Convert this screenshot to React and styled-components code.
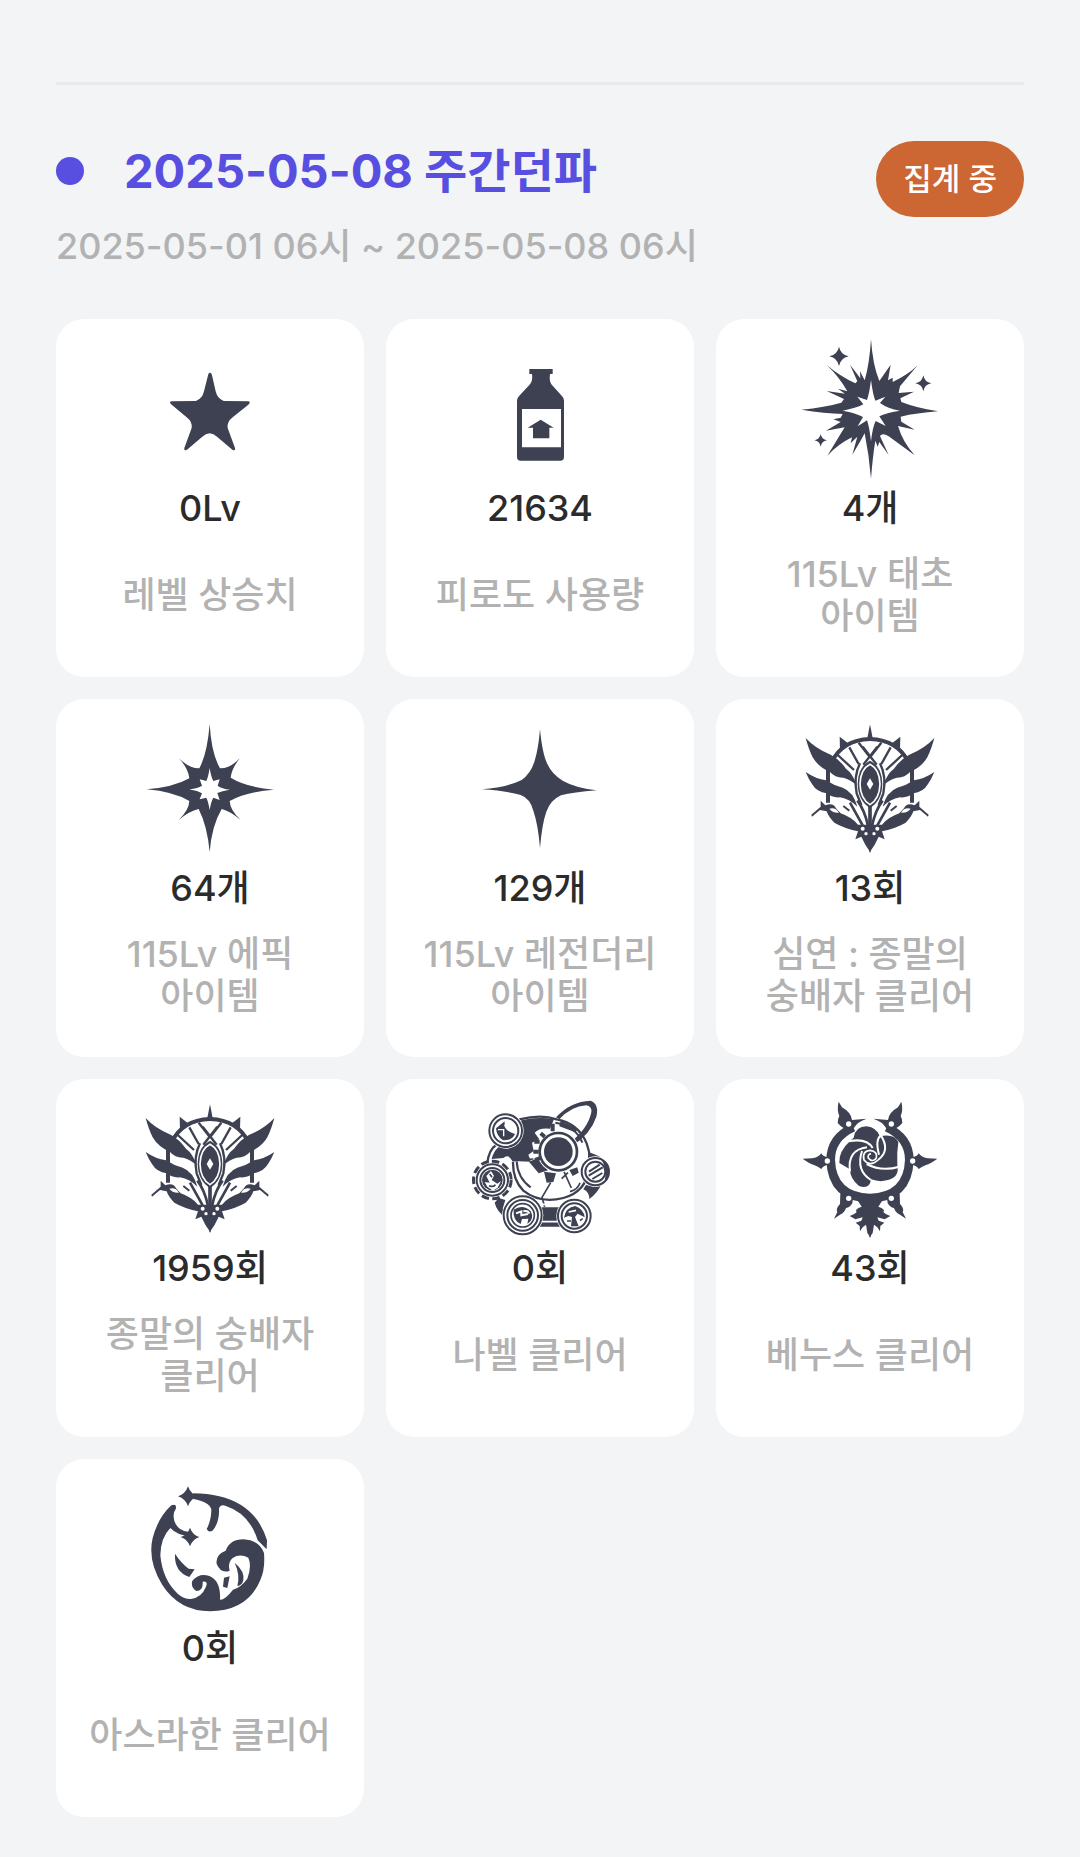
import React from 'react';
import styled, { createGlobalStyle } from 'styled-components';

const GlobalStyle = createGlobalStyle`
    * {
        box-sizing: border-box;
    }

    body {
        margin: 0;
        background: #f2f4f6;
        font-family: Inter, "Noto Sans CJK KR", sans-serif;
        word-break: keep-all;
    }
`
const Page = styled.main`
    padding: 82px 56px 40px;
`
const Section = styled.section`
    border-top: 3px solid #e8eaec;
    padding-top: 56px;
`
const Header = styled.header`
    display: flex;
    justify-content: space-between;
    align-items: flex-start;
    margin-bottom: 51px;
`
const TitleRow = styled.div`
    display: flex;
    align-items: center;
    gap: 40px;
    margin-bottom: 23px;
`
const Dot = styled.span`
    width: 28px;
    height: 28px;
    border-radius: 50%;
    background: #584ee0;
`
const Title = styled.h2`
    margin: 0;
    font-weight: 700;
    font-size: 47px;
    line-height: 60px;
    color: #584ee0;
`
const Period = styled.p`
    margin: 0;
    font-weight: 500;
    font-size: 36px;
    line-height: 44px;
    color: #b2b2b2;
`
const Badge = styled.span`
    flex-shrink: 0;
    padding: 0 27px;
    border-radius: 38px;
    background: #cc6633;
    color: #ffffff;
    font-weight: 500;
    font-size: 31px;
    line-height: 76px;
`
const Grid = styled.ul`
    display: grid;
    grid-template-columns: repeat(3, 1fr);
    gap: 22px;
    margin: 0;
    padding: 0;
    list-style: none;
`
const Card = styled.li`
    display: flex;
    flex-direction: column;
    align-items: center;
    padding: 19px 20px 40px;
    border-radius: 28px;
    background: #ffffff;
    text-align: center;
`
const Icon = styled.svg`
    width: 144px;
    height: 144px;
    fill: #3d4152;
    color: #3d4152;
`
const Value = styled.strong`
    font-weight: 500;
    font-size: 36px;
    line-height: 52px;
    color: #2b2b2b;
`
const Label = styled.span`
    display: flex;
    align-items: center;
    min-height: 84px;
    margin-top: 19px;
    font-weight: 500;
    font-size: 36px;
    line-height: 42px;
    color: #b2b2b2;
`

const line = { fill: 'none', stroke: 'currentColor' };
const white = { fill: '#ffffff' };
const whiteLine = { fill: 'none', stroke: '#ffffff' };

function Sparkle({ x, y, r, core = 7 }) {
    const k = r / core;
    return (
        <path d={`M${x} ${y - r}Q${x + k} ${y - k} ${x + r} ${y}Q${x + k} ${y + k} ${x} ${y + r}Q${x - k} ${y + k} ${x - r} ${y}Q${x - k} ${y - k} ${x} ${y - r}Z`} />
    )
}

const Star = () => (
    <path d="M240 128Q245 128 247 140L257 184Q262 206 281 213L355 214Q364 216 355 224L308 262Q290 276 293 294L315 354Q317 364 307 359L262 321Q239 299 216 321L171 359Q161 364 163 354L185 294Q188 276 170 262L125 224Q114 216 125 214L198 213Q217 206 222 184L233 140Q235 128 240 128Z" />
)

const Bottle = () => (
    <>
        <path d="M208 117H278V132H270Q267 152 274 163L305 197Q312 203 312 212V380Q312 392 301 392H182Q171 392 171 380V212Q171 203 178 197L210 163Q219 152 216 132H208Z" />
        <path d="M186 237H303V352H186Z" {...white} />
        <path d="M242 269L281 293H268V325H219V293H203Z" />
    </>
)

const Burst = () => (
    <>
        <path d="M243 28Q248 105 268 153L302 104L294 151L308 143V156Q355 134 383 106L330 169L326 189L372 185L331 205L334 216Q380 234 444 244Q380 249 332 260L334 275L374 299L324 288Q338 336 374 376Q333 346 296 319Q277 307 270 318L296 375L268 336L263 350L256 332Q248 380 243 446Q238 380 224 310L213 330L187 374L202 320L182 340L186 322Q145 342 112 377L164 292L108 302L152 276L130 268L152 263L158 252Q105 250 34 239Q105 232 154 218L162 207L110 183L165 191L144 176L172 184Q146 138 110 105Q152 140 196 160L202 154L180 104L211 145L210 124L224 151Q238 105 243 28Z" />
        <path d="M243 150Q249 196 256 212L286 200L270 219Q293 236 330 242Q293 247 268 259L287 288L257 273Q248 290 243 334Q238 290 231 271L203 289L219 261Q198 249 158 242Q198 235 220 223L202 200L231 210Q238 190 243 150Z" {...white} />
        <Sparkle x={147} y={79} r={29} core={6} />
        <Sparkle x={400} y={160} r={24} />
        <Sparkle x={92} y={331} r={19} />
    </>
)

const EpicStar = () => (
    <>
        <path d="M239 42Q244 130 270 175Q300 176 330 144Q305 175 302 203Q350 232 432 239Q350 245 299 273Q300 300 332 330Q300 303 275 297Q245 348 239 426Q232 348 206 297Q178 303 146 330Q177 300 178 273Q130 245 50 238Q130 232 178 205Q175 175 146 144Q178 176 208 175Q232 130 239 42Z" />
        <path d="M239 174Q243 200 250 213L269 208L263 227Q275 236 300 239Q275 243 262 249L269 270L250 263Q243 275 239 300Q235 275 229 263L209 268L216 250Q204 243 178 238Q204 235 216 227L209 208L229 213Q235 200 239 174Z" {...white} />
    </>
)

const LegendStar = () => (
    <path d="M240 58Q247 132 262 162Q277 194 308 212Q345 233 410 241Q340 247 303 256Q272 270 259 305Q246 342 240 414Q234 342 220 302Q210 265 182 255Q140 243 66 238Q140 232 185 210Q213 190 224 152Q235 118 240 58Z" />
)

const CultistHalf = () => (
    <>
        <path d="M47 84Q76 116 122 134Q148 148 168 176Q188 190 202 228Q182 208 160 203Q136 204 120 186Q84 170 68 142Q56 118 47 84Z" />
        <path d="M47 186Q78 207 108 211Q130 226 158 233Q190 245 202 290Q180 268 150 262Q126 264 110 250Q80 246 66 222Q56 208 47 186Z" />
        <path d="M92 272L106 286Q130 277 138 295L152 310Q186 322 204 344H242V428Q224 404 214 380L196 388L204 364Q160 354 133 338Q115 320 110 304L90 300L66 320L64 314L92 290Z" />
        <path d="M149 80L174 100L150 120Z" />
        <path d="M114 180V278M124 158Q156 90 240 87" {...line} strokeWidth="12" />
        <path d="M140 132L192 180M178 112L206 162" {...line} strokeWidth="7" />
        <path d="M206 98L240 142M220 164L262 110" {...line} strokeWidth="7" />
        <path d="M210 160Q190 200 200 250L214 285" {...line} strokeWidth="7" />
        <path d="M202 272Q224 300 234 348M180 278L218 346" {...line} strokeWidth="8" />
        <path d="M160 288L178 302" {...line} strokeWidth="6" />
        <path d="M118 296Q137 291 147 308Q128 310 118 296Z" {...white} />
        <circle cx="218" cy="356" r="6" {...white} />
        <circle cx="228" cy="371" r="5" {...white} />
    </>
)

const Cultist = () => (
    <>
        <CultistHalf />
        <g transform="translate(480 0) scale(-1 1)"><CultistHalf /></g>
        <path d="M240 43L248 84H232Z" />
        <path d="M240 285V352" {...line} strokeWidth="11" />
        <path d="M240 152Q276 170 277 222Q276 272 240 294Q204 272 203 222Q204 170 240 152Z" />
        <path d="M240 163Q269 178 270 222Q269 266 240 284Q211 266 210 222Q211 178 240 163Z" {...whiteLine} strokeWidth="5" />
        <path d="M240 205L250 222L240 239L230 222Z" {...white} />
    </>
)

function Medal({ x, y, r, children }) {
    return (
        <g transform={`translate(${x} ${y})`}>
            <circle r={r + 3} {...white} />
            <circle r={r - 2} {...line} strokeWidth="6" />
            <circle r={r - 13} {...line} strokeWidth="6" />
            {children}
        </g>
    )
}

const Nabel = () => (
    <>
        <path d="M184 91Q235 78 282 88L270 116Q238 112 224 128L238 148L216 158L221 183L205 194L213 215L157 213Q145 190 130 204L95 207Q106 163 151 156Q184 130 184 91Z" />
        <path d="M82 220Q86 180 108 165M178 88Q245 72 290 88Q355 100 380 160Q395 200 386 238Q378 305 310 324Q240 342 190 302Q158 270 159 215" {...line} strokeWidth="7" />
        <path d="M170 214Q173 264 212 292M286 98Q348 108 367 158" {...line} strokeWidth="6" />
        <path d="M302 92L354 116L346 127L298 109Z" />
        <path d="M386 186L416 198L436 212L440 240L380 232Z" />
        <path d="M288 82Q332 34 392 32Q418 42 409 80Q392 132 336 168L330 158Q384 116 394 67Q396 49 379 46Q333 49 298 88Z" />
        <path d="M207 215L234 204L264 241L236 250Z" />
        <path d="M252 245L288 250L280 276L260 278ZM328 240L352 232L356 248L338 258Z" />
        <path d="M272 278L246 322L254 350M312 245L334 294M158 212L220 207M305 266L324 248M330 305Q354 298 360 278" {...line} strokeWidth="5" />
        <circle cx="295" cy="185" r="63" {...white} />
        <circle cx="295" cy="185" r="56" {...line} strokeWidth="8" />
        <circle cx="295" cy="185" r="43" />
        <path d="M223 155H239M220 185H236M225 210L240 204M242 130L254 140M278 101V124" {...line} strokeWidth="12" />
        <path d="M242 352H300V410H238Z" />
        <path d="M235 340Q270 350 307 336M238 395H305" {...whiteLine} strokeWidth="5" />
        <path d="M378 285Q400 292 426 278Q414 308 388 327Q388 306 370 298Z" />
        <path d="M104 338Q110 365 139 384L128 356L136 330L116 324Z" />
        <circle cx="97" cy="270" r="55" {...line} strokeWidth="12" strokeDasharray="22 10" />
        <Medal x={137} y={122} r={51}>
            <path d="M-29 -7L-3 -28Q-6 1 28 10Q20 30 -8 29Q-27 18 -29 -7Z" />
            <path d="M-23 -3H-6V17M-3 -18Q2 3 27 3" {...whiteLine} strokeWidth="4" />
        </Medal>
        <Medal x={97} y={270} r={49}>
            <circle r="31" />
            <path d="M-18 -12L-4 -27L5 -13L-2 0L15 11L26 3L16 23L2 32L-15 20L-23 6L-8 8Z" {...white} />
            <path d="M-8 -18L-1 -8M-10 17Q5 23 9 14" {...line} strokeWidth="5" />
        </Medal>
        <Medal x={188} y={376} r={59}>
            <circle r="35" {...line} strokeWidth="5" />
            <path d="M-27 -17Q0 -35 24 -13Q37 12 14 26L17 10L-2 11L-6 26Q-30 15 -27 -17Z" />
            <path d="M-20 -6L-4 -12V0L16 -4M2 -12Q16 -16 20 -5" {...whiteLine} strokeWidth="6" />
        </Medal>
        <Medal x={343} y={378} r={51}>
            <path d="M-31 5Q-26 -26 3 -30Q29 -20 31 4L10 -7L2 3L13 31H-10L-7 3L-18 0Z" />
            <path d="M-22 15H-10M17 14L25 8M-12 -17L7 -19" {...line} strokeWidth="5" />
            <path d="M-17 -12L5 -17" {...whiteLine} strokeWidth="5" />
        </Medal>
        <Medal x={406} y={245} r={43}>
            <path d="M-19 0L13 -21M-20 12L22 -13M-9 22L21 4" {...line} strokeWidth="6" />
            <path d="M14 -42Q48 -23 38 18L28 29Q37 -13 14 -42Z" />
        </Medal>
    </>
)

const VenusHalf = () => (
    <>
        <path d="M146 35L156 52Q184 68 186 90L230 86Q203 94 190 116Q164 124 143 99Q144 84 148 78Q140 60 146 35Z" />
        <path d="M38 206L66 205Q84 204 94 190Q98 201 116 201V225Q101 225 94 237Q84 230 72 225Q60 222 38 206Z" />
        <path d="M151 310L190 316L187 340Q180 352 168 354Q164 368 150 374L132 386L142 366Q136 356 150 342Z" />
        <path d="M202 330L242 336V443L232 429L228 404L218 412L210 424L209 408L197 398L214 392L218 382L196 388L179 378Q194 374 200 366Q192 358 215 350Z" />
        <circle cx="176" cy="102" r="8" {...white} />
        <circle cx="112" cy="213" r="8" {...white} />
        <circle cx="176" cy="325" r="8" {...white} />
    </>
)

const Venus = () => (
    <>
        <path d="M190 112Q122 143 122 210Q126 322 240 324Q354 322 358 210Q358 143 290 112" {...line} strokeWidth="26" />
        <VenusHalf />
        <g transform="translate(480 0) scale(-1 1)"><VenusHalf /></g>
        <path d="M191 143Q196 110 230 109Q260 113 270 139Q311 130 325 155Q320 188 322 226Q330 263 290 271Q269 277 243 268Q239 300 207 288Q180 266 180 238L148 219Q146 184 180 153Z" />
        <path d="M176 154Q230 143 248 174M180 244Q171 180 231 172M243 270Q197 242 216 183M328 230Q274 246 230 222M271 134Q303 181 264 210M272 137Q255 149 267 194" {...whiteLine} strokeWidth="6" />
        <path d="M264 210Q240 232 222 210Q215 184 240 181Q265 184 258 206Q246 218 235 204Q232 193 243 191" {...whiteLine} strokeWidth="5" />
    </>
)

const Asrahan = () => (
    <>
        <path d="M190 70Q274 70 333 105Q390 141 411 211L410 238L383 211Q359 131 286 107Q269 103 267 117Q269 154 249 181Q237 190 230 177Q244 151 244 118Q237 95 190 87Z" />
        <path d="M124 106Q142 100 137 118Q127 130 133 153Q144 183 174 185L177 197Q143 197 121 174Q92 203 91 256Q98 330 143 371Q162 388 183 387Q215 382 226 354Q237 333 218 335Q220 362 199 363Q181 352 187 332Q209 307 238 318Q273 332 270 389Q285 390 309 359Q332 353 352 326Q366 289 355 263Q330 250 308 264Q292 279 299 302Q273 312 260 282Q256 253 287 242Q300 208 340 208Q389 211 402 249Q406 297 391 330Q353 423 240 424Q147 423 97 345Q52 272 68 204Q84 143 124 106Z" />
        <Sparkle x={174} y={79} r={30} core={4} />
        <Sparkle x={180} y={201} r={28} core={4} />
        <path d="M135 251Q153 279 176 296L194 298L178 321Q132 305 135 251Z" />
        <path d="M314 278Q345 304 340 331Q336 347 322 348Q331 315 314 278Z" />
        <path d="M282 323L299 319L292 354L279 350Z" />
    </>
)

const stats = [
    { icon: Star, value: '0Lv', label: '레벨 상승치' },
    { icon: Bottle, value: '21634', label: '피로도 사용량' },
    { icon: Burst, value: '4개', label: '115Lv 태초 아이템' },
    { icon: EpicStar, value: '64개', label: '115Lv 에픽 아이템' },
    { icon: LegendStar, value: '129개', label: '115Lv 레전더리 아이템' },
    { icon: Cultist, value: '13회', label: '심연 : 종말의 숭배자 클리어' },
    { icon: Cultist, value: '1959회', label: '종말의 숭배자 클리어' },
    { icon: Nabel, value: '0회', label: '나벨 클리어' },
    { icon: Venus, value: '43회', label: '베누스 클리어' },
    { icon: Asrahan, value: '0회', label: '아스라한 클리어' },
];

const App = function () {
    return (
        <Page>
            <GlobalStyle />
            <Section>
                <Header>
                    <div>
                        <TitleRow>
                            <Dot />
                            <Title>2025-05-08 주간던파</Title>
                        </TitleRow>
                        <Period>2025-05-01 06시 ~ 2025-05-08 06시</Period>
                    </div>
                    <Badge>집계 중</Badge>
                </Header>
                <Grid>
                    {stats.map(({ icon: Drawing, value, label }) => (
                        <Card key={label}>
                            <Icon viewBox="24 24 432 432" aria-hidden="true">
                                <Drawing />
                            </Icon>
                            <Value>{value}</Value>
                            <Label>{label}</Label>
                        </Card>
                    ))}
                </Grid>
            </Section>
        </Page>
    )
}

export default App
